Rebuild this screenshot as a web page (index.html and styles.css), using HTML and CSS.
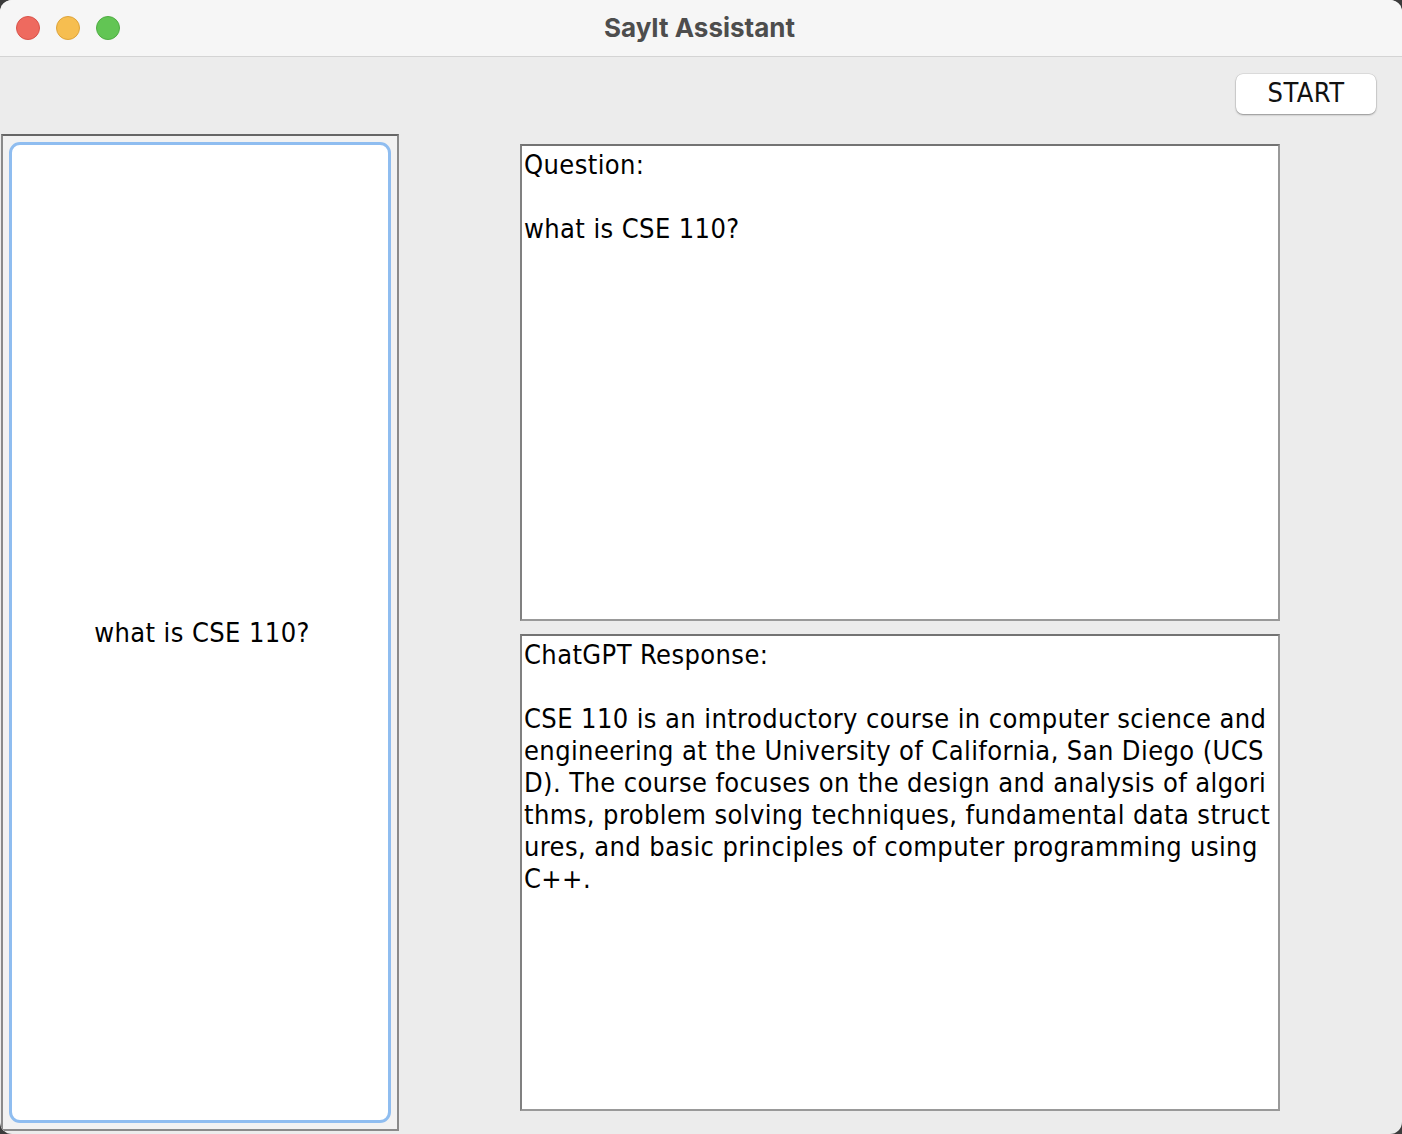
FILE: index.html
```html
<!DOCTYPE html>
<html>
<head>
<meta charset="utf-8">
<title>SayIt Assistant</title>
<link rel="stylesheet" href="styles.css">
</head>
<body>
<div class="window">
  <div class="titlebar">
    <div class="lights">
      <span class="light red"></span>
      <span class="light yellow"></span>
      <span class="light green"></span>
    </div>
    <div class="title">SayIt Assistant</div>
  </div>
  <div class="toolbar">
    <button class="start">START</button>
  </div>
  <div class="content">
    <div class="history">
      <div class="history-inner">
        <div class="history-item">what is CSE 110?</div>
      </div>
    </div>
    <div class="panes">
      <div class="pane">Question:<br><br>what is CSE 110?</div>
      <div class="pane">ChatGPT Response:<br><br>CSE 110 is an introductory course in computer science and<br>engineering at the University of California, San Diego (UCS<br>D). The course focuses on the design and analysis of algori<br>thms, problem solving techniques, fundamental data struct<br>ures, and basic principles of computer programming using<br>C++.</div>
    </div>
  </div>
</div>
</body>
</html>
```

FILE: styles.css
```css
html, body {
  margin: 0;
  padding: 0;
  background: #3c3c3c;
}

.window {
  width: 1402px;
  height: 1134px;
  background: #ececec;
  border-radius: 12px;
  overflow: hidden;
  display: flex;
  flex-direction: column;
}

.titlebar {
  height: 56px;
  flex: none;
  background: #f6f6f6;
  border-bottom: 1px solid #d4d4d4;
  position: relative;
  display: flex;
  align-items: center;
  justify-content: center;
}

.lights {
  position: absolute;
  left: 16px;
  top: 16px;
  display: flex;
  gap: 16px;
}

.light {
  width: 22px;
  height: 22px;
  border-radius: 50%;
  display: block;
}

.red { background: #ee6a5f; border: 1px solid #d9534a; }
.yellow { background: #f6be50; border: 1px solid #dea43a; }
.green { background: #62c554; border: 1px solid #4fad43; }

.title {
  font-family: Inter, "Liberation Sans", sans-serif;
  font-weight: 700;
  font-size: 26px;
  color: #4d4d4d;
  margin-left: -3px;
  margin-top: -2px;
}

.toolbar {
  height: 77px;
  flex: none;
  display: flex;
  justify-content: flex-end;
  align-items: flex-start;
  padding-right: 26px;
}

.start {
  margin-top: 17px;
  width: 140px;
  height: 40px;
  background: #ffffff;
  border: none;
  border-radius: 7px;
  box-shadow: 0 1px 2px rgba(0,0,0,0.35), 0 0 0 0.5px rgba(0,0,0,0.12);
  font-family: "DejaVu Sans Condensed", "DejaVu Sans", sans-serif;
  font-size: 27px;
  letter-spacing: 0.5px;
  color: #111;
  padding: 0 0 3px 0;
  line-height: 34px;
}

.content {
  display: flex;
  padding-left: 1px;
  gap: 121px;
}

.history {
  width: 398px;
  height: 997px;
  box-sizing: border-box;
  border: 2px solid #8a8a8a;
  border-top-color: #666;
  background: #f2f2f2;
  padding: 6px;
}

.history-inner {
  height: 100%;
  box-sizing: border-box;
  border: 3px solid #8fbdf0;
  border-radius: 11px;
  background: #fff;
  display: flex;
  align-items: center;
  justify-content: center;
}

.history-item,
.pane {
  font-family: "DejaVu Sans Condensed", "DejaVu Sans", sans-serif;
  font-size: 27px;
  letter-spacing: 0.4px;
  line-height: 32px;
  color: #000;
}

.history-item {
  margin-left: 4px;
}

.panes {
  margin-top: 10px;
  display: flex;
  flex-direction: column;
  gap: 13px;
}

.pane {
  width: 760px;
  height: 477px;
  box-sizing: border-box;
  background: #fff;
  border: 2px solid #999;
  border-top-color: #737373;
  border-left-color: #808080;
  padding: 3px 2px;
  white-space: nowrap;
}
```
